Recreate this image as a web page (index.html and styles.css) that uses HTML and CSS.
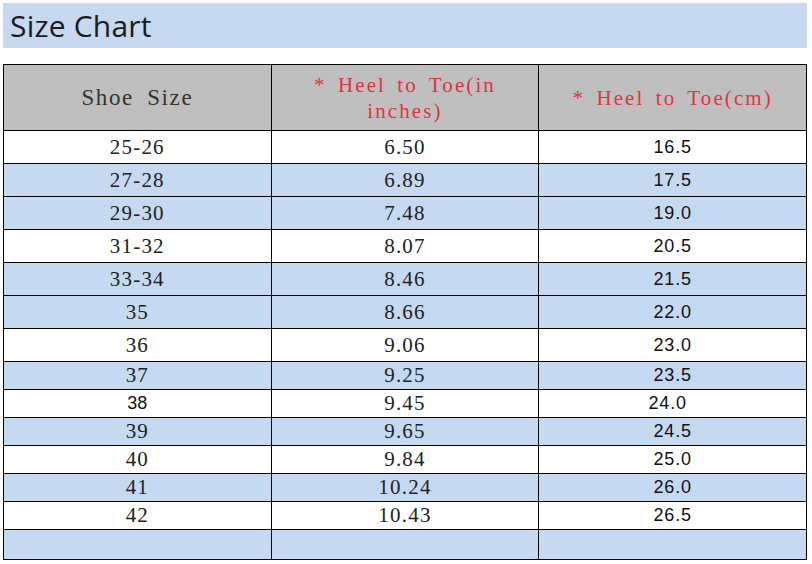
FILE: index.html
```html
<!DOCTYPE html>
<html lang="en">
<head>
<meta charset="utf-8">
<title>Size Chart</title>
<link rel="stylesheet" href="styles.css">
</head>
<body>
<div class="page">
  <h1 class="title">Size Chart</h1>
  <table class="chart">
    <thead>
      <tr class="head">
        <th class="h-size">Shoe Size</th>
        <th class="h-red">* Heel to Toe(in<br>inches)</th>
        <th class="h-red">* Heel to Toe(cm)</th>
      </tr>
    </thead>
    <tbody>
      <tr class="r33 w"><td>25-26</td><td>6.50</td><td class="cm">16.5</td></tr>
      <tr class="r33 b"><td>27-28</td><td>6.89</td><td class="cm">17.5</td></tr>
      <tr class="r33 b"><td>29-30</td><td>7.48</td><td class="cm">19.0</td></tr>
      <tr class="r33 w"><td>31-32</td><td>8.07</td><td class="cm">20.5</td></tr>
      <tr class="r33 b"><td>33-34</td><td>8.46</td><td class="cm">21.5</td></tr>
      <tr class="r33 b"><td>35</td><td>8.66</td><td class="cm">22.0</td></tr>
      <tr class="r33 w"><td>36</td><td>9.06</td><td class="cm">23.0</td></tr>
      <tr class="r28 b"><td>37</td><td>9.25</td><td class="cm">23.5</td></tr>
      <tr class="r28 w"><td class="sans">38</td><td>9.45</td><td class="cm shift">24.0</td></tr>
      <tr class="r28 b"><td>39</td><td>9.65</td><td class="cm">24.5</td></tr>
      <tr class="r28 w"><td>40</td><td>9.84</td><td class="cm">25.0</td></tr>
      <tr class="r28 b"><td>41</td><td>10.24</td><td class="cm">26.0</td></tr>
      <tr class="r28 w"><td>42</td><td>10.43</td><td class="cm">26.5</td></tr>
      <tr class="r30 b"><td></td><td></td><td></td></tr>
    </tbody>
  </table>
</div>
</body>
</html>
```
FILE: styles.css
```css
html, body {
  margin: 0;
  padding: 0;
  background: #ffffff;
}

.page {
  padding: 3px 5px 0 3px;
  display: flex;
  flex-direction: column;
  gap: 16px;
}

.title {
  margin: 0;
  height: 45px;
  background: #c6d9f0;
  font-family: "Open Sans", "Noto Sans", sans-serif;
  font-weight: 400;
  font-size: 30px;
  line-height: 45px;
  color: #1b1b1b;
  padding-left: 7px;
  letter-spacing: 0.2px;
}

.chart {
  width: 804px;
  border-collapse: collapse;
  table-layout: fixed;
  font-family: "Liberation Serif", "Times New Roman", serif;
  font-size: 21px;
  color: #222222;
  letter-spacing: 1.2px;
}

.chart th,
.chart td {
  border: 1.5px solid #000000;
  padding: 0;
  text-align: center;
  vertical-align: middle;
  width: 33.33%;
}

.head {
  height: 66px;
  background: #bfbfbf;
}

.head th {
  font-weight: 400;
  line-height: 26px;
}

.h-size {
  font-size: 23px;
  color: #333333;
  letter-spacing: 1.6px;
  word-spacing: 6px;
}

.h-red {
  font-size: 21px;
  color: #e2343e;
  letter-spacing: 2.1px;
  word-spacing: 4px;
}

.r33 { height: 33px; }
.r28 { height: 28px; }
.r30 { height: 30px; }

.w { background: #ffffff; }
.b { background: #c5d9f1; }

.chart td.cm,
.chart td.sans {
  font-family: "Liberation Sans", Arial, sans-serif;
  font-size: 18px;
  color: #111111;
  letter-spacing: 0.8px;
}

.chart td.sans {
  letter-spacing: 0;
}

.chart td.shift {
  padding-right: 10px;
}
```
